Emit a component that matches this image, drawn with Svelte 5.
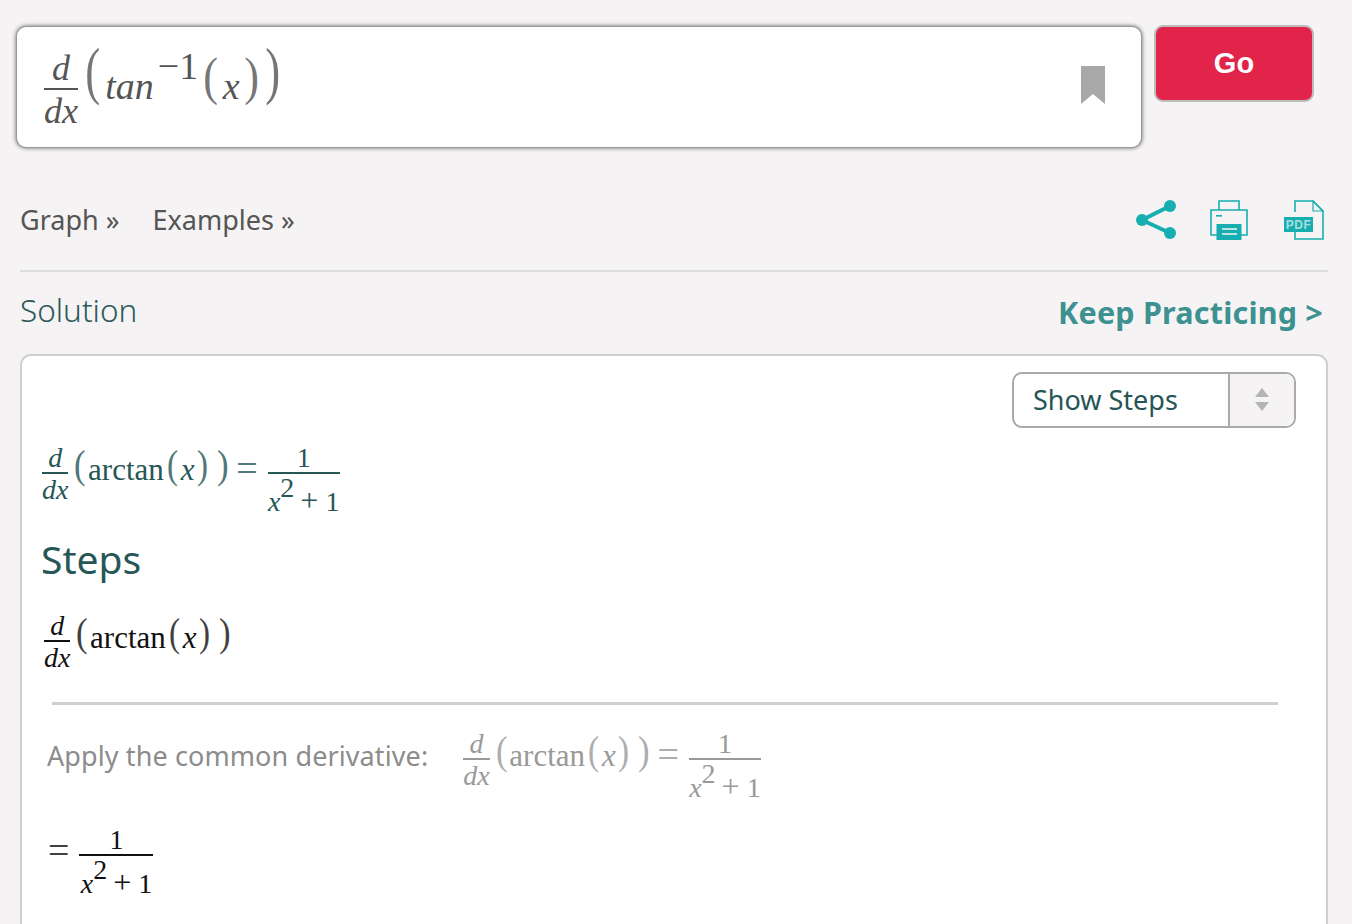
<script>
  const ddx = 'd';
</script>

{#snippet dfrac()}
  <span class="frac"><span class="num it">{ddx}</span><span class="den it">dx</span></span>
{/snippet}

{#snippet arctan()}
  <span class="row">
    {@render dfrac()}
    <span class="paren outer open">(</span>
    <span class="fn">arctan</span>
    <span class="paren open-in">(</span>
    <span class="var it">x</span>
    <span class="paren close-in">)</span>
    <span class="paren outer close">)</span>
  </span>
{/snippet}

{#snippet result()}
  <span class="frac wide">
    <span class="num">1</span>
    <span class="den poly"><span class="it">x</span><sup>2</sup><span class="plus">+</span><span>1</span></span>
  </span>
{/snippet}

<div class="page">
  <div class="top">
    <div class="search">
      <span class="row big">
        {@render dfrac()}
        <span class="paren outer open">(</span>
        <span class="it tan">tan</span>
        <span class="exp">−1</span>
        <span class="paren open-in">(</span>
        <span class="var it">x</span>
        <span class="paren close-in">)</span>
        <span class="paren outer close">)</span>
      </span>
      <svg class="bookmark" width="24" height="38" viewBox="0 0 24 38"><path d="M0 0H24V38L12 28L0 38Z" fill="#a8a8a8" /></svg>
    </div>
    <button class="go">Go</button>
  </div>

  <div class="tools">
    <nav class="links">
      <span>Graph »</span>
      <span>Examples »</span>
    </nav>
    <div class="icons">
      <svg width="40" height="40" viewBox="0 0 40 40">
        <path d="M6 20L34 6M6 20L34 33" stroke="#16aeb0" stroke-width="4" fill="none" />
        <circle cx="6" cy="20" r="6" fill="#16aeb0" />
        <circle cx="34" cy="6" r="6" fill="#16aeb0" />
        <circle cx="34" cy="33" r="6" fill="#16aeb0" />
      </svg>
      <svg width="38" height="40" viewBox="0 0 38 40">
        <g fill="none" stroke="#16aeb0" stroke-width="1.6">
          <path d="M9 10V1H29V10" />
          <path d="M7 35H1V10H37V35H31" />
        </g>
        <rect x="6" y="15" width="6" height="1.6" fill="#16aeb0" />
        <rect x="6.500" y="24" width="25" height="16" fill="#16aeb0" />
        <rect x="12" y="28" width="15" height="2" fill="#f5f3f4" opacity=".75" />
        <rect x="12" y="33" width="15" height="2" fill="#f5f3f4" opacity=".75" />
      </svg>
      <svg class="pdf-icon" width="40" height="40" viewBox="0 0 40 40">
        <path d="M11 12V1H29L39 11V39H11V30" fill="none" stroke="#16aeb0" stroke-width="1.6" />
        <path d="M29 1V11H39Z" fill="none" stroke="#16aeb0" stroke-width="1.2" />
        <rect x="0" y="17" width="29" height="15" fill="#16aeb0" />
        <text x="14.500" y="29" text-anchor="middle" class="pdf">PDF</text>
      </svg>
    </div>
  </div>

  <div class="heading">
    <span class="solution">Solution</span>
    <span class="keep">Keep Practicing &gt;</span>
  </div>

  <section class="card">
    <div class="select-line">
      <div class="select">
        <span class="select-label">Show Steps</span>
        <span class="select-arrows">
          <svg width="16" height="26" viewBox="0 0 16 26">
            <path d="M8 1L15 10H1Z M1 15H15L8 24Z" fill="#b4b4b4" />
          </svg>
        </span>
      </div>
    </div>

    <div class="math teal">
      {@render arctan()}
      <span class="eq">=</span>
      {@render result()}
    </div>

    <h2>Steps</h2>

    <div class="math black step-start">
      {@render arctan()}
    </div>

    <hr />

    <div class="apply">
      <span class="apply-label">Apply the common derivative:</span>
      <div class="math grey">
        {@render arctan()}
        <span class="eq">=</span>
        {@render result()}
      </div>
    </div>

    <div class="math black answer">
      <span class="eq first">=</span>
      {@render result()}
    </div>
  </section>
</div>

<style>
  :global(html), :global(body) {
    margin: 0;
    overflow: hidden;
    background: #f5f3f4;
  }
  .page {
    height: 924px;
    overflow: hidden;
    box-sizing: border-box;
    padding: 25px 24px 0 20px;
    font-family: "Noto Sans", "Open Sans", sans-serif;
  }

  .top {
    display: flex;
    align-items: flex-start;
    margin-left: -3px;
    margin-right: 14px;
    gap: 13px;
  }
  .search {
    flex: 1;
    height: 120px;
    margin-top: 2px;
    box-sizing: border-box;
    display: flex;
    justify-content: space-between;
    align-items: flex-start;
    padding: 28px 36px 0 27px;
    background: #fff;
    border-radius: 9px;
    box-shadow: 0 0 0 1px #999, 0 0 4px 1px #666;
  }
  .bookmark {
    margin-top: 11px;
  }
  .go {
    width: 160px;
    height: 77px;
    padding: 0;
    border: 2px solid #bcbcbc;
    border-radius: 9px;
    background: #e2244a;
    color: #fff;
    font-family: "Liberation Sans", Arial, sans-serif;
    font-weight: 700;
    font-size: 29px;
  }

  .tools {
    display: flex;
    justify-content: space-between;
    align-items: center;
    margin-top: 53px;
    height: 40px;
  }
  .links {
    display: flex;
    gap: 33px;
    font-size: 27px;
    color: #555;
    padding-bottom: 2px;
  }
  .icons {
    display: flex;
    gap: 34px;
    align-items: center;
    margin-right: 4px;
  }
  .pdf-icon {
    margin-left: 2px;
  }
  .pdf {
    font-family: "Liberation Sans", Arial, sans-serif;
    font-weight: 700;
    font-size: 12px;
    letter-spacing: 0.5px;
    fill: #a9dede;
  }

  .heading {
    display: flex;
    justify-content: space-between;
    align-items: flex-start;
    margin-top: 30px;
    border-top: 2px solid #dedddd;
    padding: 16px 5px 0 0;
    height: 64px;
    box-sizing: border-box;
  }
  .solution {
    font-size: 31.5px;
    font-weight: 300;
    line-height: 44px;
    color: #2b5a5a;
  }
  .keep {
    font-size: 30.5px;
    font-weight: 700;
    letter-spacing: 0.2px;
    line-height: 44px;
    margin-top: 2px;
    color: #3d9190;
  }

  .card {
    margin-top: 20px;
    height: 640px;
    box-sizing: border-box;
    padding: 16px 30px 0 20px;
    background: #fff;
    border: 2px solid #cfcfcf;
    border-radius: 11px;
  }
  .select-line {
    display: flex;
    justify-content: flex-end;
  }
  .select {
    display: flex;
    width: 284px;
    height: 56px;
    box-sizing: border-box;
    border: 2px solid #aaa;
    border-radius: 10px;
    overflow: hidden;
  }
  .select-label {
    flex: 1;
    padding: 0 0 0 19px;
    font-size: 27px;
    line-height: 51px;
    color: #255555;
  }
  .select-arrows {
    width: 64px;
    background: #f5f3f4;
    border-left: 2px solid #aaa;
    display: flex;
    align-items: center;
    justify-content: center;
  }

  /* math: every row is top aligned so that fraction bars share one height */
  .math {
    display: flex;
    align-items: flex-start;
    font-family: "Liberation Serif", "Times New Roman", serif;
    font-size: 31px;
    line-height: 1;
  }
  .row {
    display: inline-flex;
    align-items: flex-start;
  }
  .it {
    font-style: italic;
  }
  .frac {
    display: inline-flex;
    flex-direction: column;
    align-items: center;
    font-size: 28px;
  }
  .num {
    align-self: stretch;
    text-align: center;
    line-height: 22px;
    padding-bottom: 3px;
    border-bottom: 2px solid currentColor;
  }
  .den {
    line-height: 31px;
  }
  .frac.wide {
    min-width: 72px;
    margin-left: 10px;
  }
  .poly {
    display: inline-flex;
    align-items: baseline;
    white-space: nowrap;
    padding-top: 11px;
  }
  .poly sup {
    font-size: 28px;
    line-height: 0;
    position: relative;
    top: -14px;
    vertical-align: baseline;
  }
  .poly .plus {
    font-size: 32px;
    margin: 0 7px 0 6px;
  }

  .paren {
    display: inline-block;
    font-size: 39px;
    line-height: 1;
    margin-top: -2px;
    opacity: 0.8;
    transform: scaleX(0.85);
  }
  .paren.outer {
    font-size: 41px;
    margin-top: -3px;
  }
  .paren.open {
    margin-left: 5px;
  }
  .open-in {
    margin-left: 2px;
  }
  .close-in {
    margin-left: 1px;
  }
  .paren.close {
    margin-left: 7px;
  }
  .fn {
    margin: 7px 0 0 1px;
  }
  .var {
    margin: 7px 0 0 2px;
  }
  .eq {
    font-size: 38px;
    line-height: 1;
    margin: 2px 0 0 7px;
    opacity: 0.8;
  }
  .eq.first {
    margin-left: 6px;
  }

  .big {
    color: #555;
    font-family: "Liberation Serif", "Times New Roman", serif;
    font-size: 38px;
    line-height: 1;
  }
  .big .frac {
    font-size: 36px;
  }
  .big .num {
    line-height: 26px;
    padding-bottom: 7px;
  }
  .big .den {
    line-height: 36px;
    padding-top: 3px;
  }
  .big .paren {
    font-size: 52px;
    margin-top: -4px;
    transform: scaleX(0.85);
  }
  .big .paren.outer {
    font-size: 64px;
    margin-top: -16px;
    transform: scaleX(0.7);
  }
  .big .paren.open {
    margin-left: 4px;
  }
  .big .tan {
    margin: 12px 0 0 2px;
  }
  .big .exp {
    margin: -8px 0 0 4px;
  }
  .big .open-in {
    margin-left: 4px;
  }
  .big .var {
    margin: 12px 0 0 3px;
  }
  .big .close-in {
    margin-left: 3px;
  }
  .big .paren.close {
    margin-left: 2px;
  }

  .teal {
    color: #265656;
    margin-top: 19px;
  }
  h2 {
    margin: 17px 0 0 -1px;
    font-size: 39px;
    font-weight: 400;
    line-height: 50px;
    color: #265656;
  }
  .black {
    color: #111;
  }
  .step-start {
    margin: 31px 0 0 2px;
  }
  hr {
    margin: 29px 18px 0 10px;
    border: 0;
    height: 3px;
    background: #cfcfcf;
  }
  .apply {
    display: flex;
    align-items: flex-start;
    margin: 28px 0 0 5px;
    gap: 35px;
  }
  .apply-label {
    margin-top: 4px;
    font-size: 27px;
    letter-spacing: 0.1px;
    line-height: 37px;
    color: #8c8c8c;
  }
  .grey {
    color: #999;
  }
  .answer {
    margin-top: 26px;
  }
  .answer .frac.wide {
    min-width: 74px;
  }
</style>
